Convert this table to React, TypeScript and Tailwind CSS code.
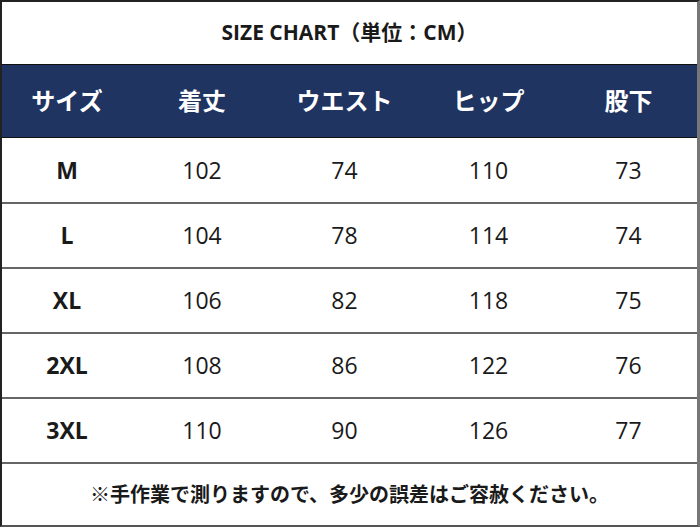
const headers = ['サイズ', '着丈', 'ウエスト', 'ヒップ', '股下'];

const rows = [
  ['M', '102', '74', '110', '73'],
  ['L', '104', '78', '114', '74'],
  ['XL', '106', '82', '118', '75'],
  ['2XL', '108', '86', '122', '76'],
  ['3XL', '110', '90', '126', '77'],
];

const font = { fontFamily: '"Open Sans", "Noto Sans CJK JP", sans-serif' };

export default function App() {
  return (
    <div
      className="w-[700px] h-[527px] bg-white text-[#1a1a1a] flex flex-col border-t-2 border-l-2 border-b-2 border-r-[3px] border-t-[#222] border-l-[#222] border-b-[#555] border-r-[#777]"
      style={font}
    >
      {/* タイトル */}
      <div className="h-[62px] flex items-center justify-center text-[21px] font-bold">
        SIZE CHART（単位：CM）
      </div>

      {/* ヘッダー */}
      <div className="h-[74px] bg-[#1f3461] text-white grid grid-cols-[130px_140px_145px_143px_1fr] items-center text-[24px] font-bold border-y border-y-[#111]">
        {headers.map((h) => (
          <div key={h} className="text-center">
            {h}
          </div>
        ))}
      </div>

      {/* サイズ表 */}
      {rows.map((r, i) => (
        <div
          key={r[0]}
          className={`grid grid-cols-[130px_140px_145px_143px_1fr] items-center text-[23px] ${
            i > 0 ? 'h-[65px] border-t-2 border-t-[#666]' : 'h-[64px]'
          }`}
        >
          {r.map((c, j) => (
            <div key={j} className={`text-center ${j === 0 ? 'font-bold' : ''}`}>
              {c}
            </div>
          ))}
        </div>
      ))}

      {/* 注意書き */}
      <div className="flex-1 border-t-2 border-t-[#666] flex items-center justify-center text-[20px] font-bold">
        ※手作業で測りますので、多少の誤差はご容赦ください。
      </div>
    </div>
  );
}
